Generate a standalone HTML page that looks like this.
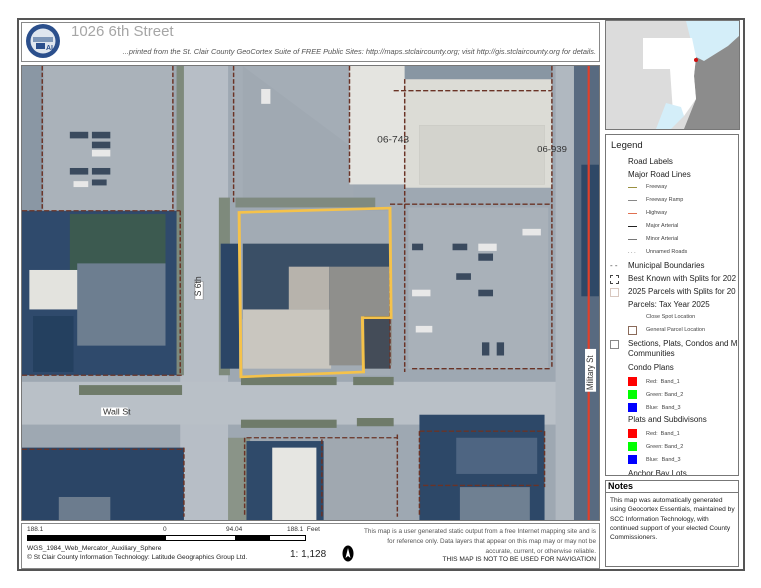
<!DOCTYPE html>
<html><head><meta charset="utf-8"><style>
*{margin:0;padding:0;box-sizing:border-box}
body{width:761px;height:588px;background:#fff;position:relative;overflow:hidden;font-family:"Liberation Sans",sans-serif}
.a{position:absolute}
.box{position:absolute;border:1px solid #777}
.lg{position:absolute;font-size:8px;color:#222;white-space:nowrap}
.sm{position:absolute;font-size:5.5px;color:#444;white-space:nowrap}
.ln{position:absolute;width:9px;height:1px}
.sq{position:absolute;width:9px;height:9px}
</style></head><body>
<div class="a" style="left:17px;top:18px;width:728px;height:553px;border:2px solid #555"></div>
<!-- title -->
<div class="box" style="left:21px;top:22px;width:579px;height:40px;border-color:#888"></div>
<svg class="a" style="left:25px;top:23px" width="36" height="36" viewBox="0 0 36 36">
<circle cx="18" cy="18" r="17" fill="#2b4f8c"/><circle cx="18" cy="18" r="12.5" fill="#dfe6ef"/>
<rect x="8" y="14" width="20" height="5" fill="#7d96b8"/><rect x="11" y="20" width="9" height="6" fill="#2b4f8c"/><text x="21" y="27" font-size="7" fill="#2b4f8c" font-family="Liberation Sans" font-weight="bold">AI</text></svg>
<div class="a" style="left:71px;top:23px;font-size:15px;color:#a6a6a6">1026 6th Street</div>
<div class="a" style="left:70px;top:47px;width:526px;text-align:right;font-size:7.4px;font-style:italic;color:#555">...printed from the St. Clair County GeoCortex Suite of FREE Public Sites: http://maps.stclaircounty.org; visit http://gis.stclaircounty.org for details.</div>
<!-- map -->
<svg class="a" style="left:21px;top:65px;border:1px solid #777" width="579" height="456" viewBox="0 0 1568 1380" preserveAspectRatio="none">
<rect width="1568" height="1380" fill="#9ea8b2"/>
<rect x="60" y="0" width="350" height="440" fill="#aab2ba"/>
<rect x="0" y="0" width="55" height="440" fill="#8a97a4"/>
<rect x="570" y="0" width="330" height="400" fill="#a4adb6"/>
<path d="M600 0 L900 250 L900 400 L600 400Z" fill="#a0a9b2"/>
<rect x="0" y="440" width="430" height="500" fill="#2f4a6c"/>
<rect x="130" y="450" width="260" height="180" fill="#3c5a50"/>
<rect x="20" y="620" width="180" height="120" fill="#e3e3de"/>
<rect x="150" y="600" width="240" height="250" fill="#6d7e90"/>
<rect x="30" y="760" width="110" height="170" fill="#24405f"/>
<rect x="430" y="0" width="130" height="1380" fill="#b7bec6"/>
<rect x="0" y="960" width="1500" height="130" fill="#b9c0c7"/>
<rect x="155" y="970" width="280" height="30" fill="#6f7b6a"/>
<rect x="595" y="945" width="260" height="25" fill="#6f7b6a"/>
<rect x="900" y="945" width="110" height="25" fill="#6f7b6a"/>
<rect x="595" y="1075" width="260" height="25" fill="#6f7b6a"/>
<rect x="910" y="1070" width="100" height="25" fill="#6f7b6a"/>
<rect x="420" y="0" width="20" height="940" fill="#7e8a7c"/>
<rect x="535" y="400" width="30" height="540" fill="#7e8a7c"/>
<rect x="580" y="400" width="380" height="30" fill="#7f8a80"/>
<rect x="890" y="0" width="150" height="360" fill="#e4e4e0"/>
<rect x="1040" y="40" width="400" height="330" fill="#dcdcd6"/>
<rect x="1080" y="180" width="340" height="180" fill="#d3d3cd" stroke="#c0c0ba"/>
<rect x="1040" y="0" width="400" height="40" fill="#8896a3"/>
<rect x="1050" y="430" width="380" height="490" fill="#a9b1b9"/>
<rect x="540" y="540" width="60" height="380" fill="#2b4566"/>
<rect x="590" y="440" width="410" height="500" fill="#a2abb4"/>
<rect x="600" y="540" width="400" height="230" fill="#3a4f66"/>
<rect x="600" y="740" width="240" height="180" fill="#c9c6bf"/>
<rect x="725" y="610" width="110" height="130" fill="#b7b3ac"/>
<rect x="835" y="610" width="170" height="300" fill="#8f8f8c"/>
<rect x="930" y="760" width="70" height="160" fill="#444c58"/>
<rect x="1450" y="0" width="50" height="1380" fill="#b0b8c0"/>
<rect x="1500" y="0" width="68" height="1380" fill="#586a80"/>
<rect x="1520" y="300" width="48" height="400" fill="#2e4866"/>
<line x1="1540" y1="0" x2="1540" y2="1380" stroke="#e0402a" stroke-width="6"/>
<rect x="0" y="1160" width="440" height="220" fill="#2b4566"/>
<rect x="100" y="1310" width="140" height="70" fill="#6c7c8e"/>
<rect x="560" y="1130" width="60" height="250" fill="#8a9488"/>
<rect x="610" y="1140" width="210" height="240" fill="#2f4a6a"/>
<rect x="680" y="1160" width="120" height="220" fill="#e6e6e2"/>
<rect x="820" y="1130" width="200" height="250" fill="#a0a8b0"/>
<rect x="1080" y="1060" width="340" height="320" fill="#2d4868"/>
<rect x="1190" y="1280" width="190" height="100" fill="#6f8092"/>
<rect x="1180" y="1130" width="220" height="110" fill="#4e6582"/>
<g fill="#3a4a5e">
<rect x="1060" y="540" width="30" height="20"/><rect x="1170" y="540" width="40" height="20"/><rect x="1240" y="570" width="40" height="22"/><rect x="1180" y="630" width="40" height="20"/><rect x="1240" y="680" width="40" height="20"/><rect x="1250" y="840" width="20" height="40"/><rect x="1290" y="840" width="20" height="40"/>
<rect x="130" y="200" width="50" height="20"/><rect x="190" y="200" width="50" height="20"/><rect x="190" y="230" width="50" height="20"/><rect x="130" y="310" width="50" height="20"/><rect x="190" y="310" width="50" height="20"/><rect x="190" y="345" width="40" height="18"/>
</g>
<g fill="#e8e8e8"><rect x="1240" y="540" width="50" height="22"/><rect x="1060" y="680" width="50" height="20"/><rect x="1070" y="790" width="45" height="20"/><rect x="190" y="255" width="50" height="20"/><rect x="140" y="350" width="40" height="18"/><rect x="1360" y="495" width="50" height="20"/><rect x="650" y="70" width="25" height="45"/></g>
<g fill="none" stroke="#6a3326" stroke-width="4" stroke-dasharray="14 6">
<path d="M55 0V440M410 0V440M0 440H430M430 440V935M0 940H440M575 0V420M890 0V355M1040 40V930M1010 75H1440M1440 0V920M1060 920H1440M1000 420H1440M0 1165H440M440 1160V1370M605 1130V1370M610 1130H1020M815 1135V1370M1020 1120V1370M1080 1110H1420M1080 1110V1370M1420 1110V1280M1090 1275H1410M1000 430V920"/>
</g>
<path d="M590 445 L1000 432 L1003 765 L925 765 L928 930 L595 945Z" fill="none" stroke="#f5c24a" stroke-width="8"/>
<rect x="470" y="655" width="22" height="55" fill="#fff" stroke="#555"/>
<text x="487" y="700" font-size="26" transform="rotate(-90 487 700)" font-family="Liberation Sans" fill="#333">S 6th</text>
<rect x="215" y="1038" width="72" height="26" fill="#fff"/>
<text x="220" y="1059" font-size="24" font-family="Liberation Sans" fill="#333">Wall St</text>
<rect x="1530" y="860" width="30" height="130" fill="#fff"/>
<text x="1552" y="985" font-size="24" transform="rotate(-90 1552 985)" font-family="Liberation Sans" fill="#333">Military St</text>
<text x="965" y="232" font-size="28" font-family="Liberation Sans" fill="#333">06-743</text>
<text x="1400" y="262" font-size="26" font-family="Liberation Sans" fill="#333">06-939</text>
</svg>
<!-- scale area -->
<div class="box" style="left:21px;top:523px;width:579px;height:46px;border-color:#888"></div>
<div class="sm" style="left:27px;top:526px;font-size:6.5px;color:#333">188.1</div>
<div class="sm" style="left:163px;top:526px;font-size:6.5px;color:#333">0</div>
<div class="sm" style="left:226px;top:526px;font-size:6.5px;color:#333">94.04</div>
<div class="sm" style="left:287px;top:526px;font-size:6.5px;color:#333">188.1&nbsp; Feet</div>
<div class="a" style="left:27px;top:535px;width:138px;height:6px;background:#000"></div>
<div class="a" style="left:165px;top:535px;width:141px;height:6px;border:1px solid #000;background:#fff"></div>
<div class="a" style="left:235px;top:535px;width:35px;height:6px;background:#000"></div>
<div class="sm" style="left:27px;top:545px;font-size:6.6px;color:#222">WGS_1984_Web_Mercator_Auxiliary_Sphere</div>
<div class="sm" style="left:27px;top:554px;font-size:6.6px;color:#222">© St Clair County Information Technology: Latitude Geographics Group Ltd.</div>
<div class="a" style="left:290px;top:549px;font-size:10px;color:#222">1: 1,128</div>
<svg class="a" style="left:342px;top:545px" width="12" height="17" viewBox="0 0 12 17"><ellipse cx="6" cy="8.5" rx="5.5" ry="8" fill="#000"/><path d="M6 3 L8.5 13 L6 11 L3.5 13Z" fill="#fff"/></svg>
<div class="a" style="left:362px;top:527px;width:234px;text-align:right;font-size:6.4px;line-height:10px;color:#555">This map is a user generated static output from a free Internet mapping site and is for reference only. Data layers that appear on this map may or may not be accurate, current, or otherwise reliable.</div>
<div class="a" style="left:362px;top:556px;width:234px;text-align:right;font-size:6.6px;color:#222">THIS MAP IS NOT TO BE USED FOR NAVIGATION</div>
<!-- overview -->
<div class="box" style="left:605px;top:20px;width:135px;height:110px;background:#dcdcdc"></div>
<svg class="a" style="left:606px;top:21px" width="133" height="108" viewBox="0 0 133 108">
<path d="M80 0 H133 V15 L122 25 L98 40 L90 36 L85 20Z" fill="#d4eef9"/>
<path d="M122 25 L133 15 V108 H78 L90 78 L88 55 L90 36 L98 40Z" fill="#8c8c8c"/>
<path d="M37 17 H86 L90 36 L88 55 L90 78 L78 95 L67 92 L64 48 H37Z" fill="#fff"/>
<path d="M50 108 L60 82 L75 86 L78 95 L65 108Z" fill="#d4eef9"/>
<circle cx="90" cy="39" r="2" fill="#d01010"/>
</svg>
<!-- legend -->
<div class="box" style="left:605px;top:134px;width:134px;height:342px;overflow:hidden">
<div class="lg" style="left:5px;top:5px;font-size:9.5px">Legend</div>
<div class="lg" style="left:22px;top:22px">Road Labels</div>
<div class="lg" style="left:22px;top:35px">Major Road Lines</div>
<div class="ln" style="left:22px;top:52px;background:#9a9040"></div><div class="sm" style="left:40px;top:49px">Freeway</div>
<div class="ln" style="left:22px;top:65px;background:#888"></div><div class="sm" style="left:40px;top:62px">Freeway Ramp</div>
<div class="ln" style="left:22px;top:78px;background:#e07050"></div><div class="sm" style="left:40px;top:75px">Highway</div>
<div class="ln" style="left:22px;top:91px;background:#222"></div><div class="sm" style="left:40px;top:88px">Major Arterial</div>
<div class="ln" style="left:22px;top:104px;background:#777"></div><div class="sm" style="left:40px;top:101px">Minor Arterial</div>
<div class="sm" style="left:22px;top:114px">. . .</div><div class="sm" style="left:40px;top:114px">Unnamed Roads</div>
<div class="sm" style="left:4px;top:126px;font-size:8px">- -</div><div class="lg" style="left:22px;top:126px">Municipal Boundaries</div>
<div class="sq" style="left:4px;top:140px;border:1px dashed #444"></div><div class="lg" style="left:22px;top:139px">Best Known with Splits for 202</div>
<div class="sq" style="left:4px;top:153px;border:1px solid #d8c8c0"></div><div class="lg" style="left:22px;top:152px">2025 Parcels with Splits for 20</div>
<div class="lg" style="left:22px;top:165px">Parcels: Tax Year 2025</div>
<div class="sm" style="left:40px;top:179px">Close Spot Location</div>
<div class="sq" style="left:22px;top:191px;border:1px solid #8a6a5a"></div><div class="sm" style="left:40px;top:192px">General Parcel Location</div>
<div class="sq" style="left:4px;top:205px;border:1px solid #888"></div><div class="lg" style="left:22px;top:204px">Sections, Plats, Condos and M</div>
<div class="lg" style="left:22px;top:214px">Communities</div>
<div class="lg" style="left:22px;top:228px">Condo Plans</div>
<div class="sq" style="left:22px;top:242px;background:#f00"></div><div class="sm" style="left:40px;top:244px">Red:&nbsp; Band_1</div>
<div class="sq" style="left:22px;top:255px;background:#0f0"></div><div class="sm" style="left:40px;top:257px">Green: Band_2</div>
<div class="sq" style="left:22px;top:268px;background:#00f"></div><div class="sm" style="left:40px;top:270px">Blue:&nbsp; Band_3</div>
<div class="lg" style="left:22px;top:280px">Plats and Subdivisons</div>
<div class="sq" style="left:22px;top:294px;background:#f00"></div><div class="sm" style="left:40px;top:296px">Red:&nbsp; Band_1</div>
<div class="sq" style="left:22px;top:307px;background:#0f0"></div><div class="sm" style="left:40px;top:309px">Green: Band_2</div>
<div class="sq" style="left:22px;top:320px;background:#00f"></div><div class="sm" style="left:40px;top:322px">Blue:&nbsp; Band_3</div>
<div class="lg" style="left:22px;top:334px">Anchor Bay Lots</div>
</div>
<!-- notes -->
<div class="box" style="left:605px;top:480px;width:134px;height:87px"></div>
<div class="a" style="left:605px;top:480px;width:134px;height:13px;border:1px solid #777;font-size:9px;font-weight:bold;padding-left:2px;line-height:11px">Notes</div>
<div class="a" style="left:610px;top:496px;width:128px;font-size:6.6px;line-height:9.3px;color:#222">This map was automatically generated using Geocortex Essentials, maintained by SCC Information Technology, with continued support of your elected County Commissioners.</div>
</body></html>
